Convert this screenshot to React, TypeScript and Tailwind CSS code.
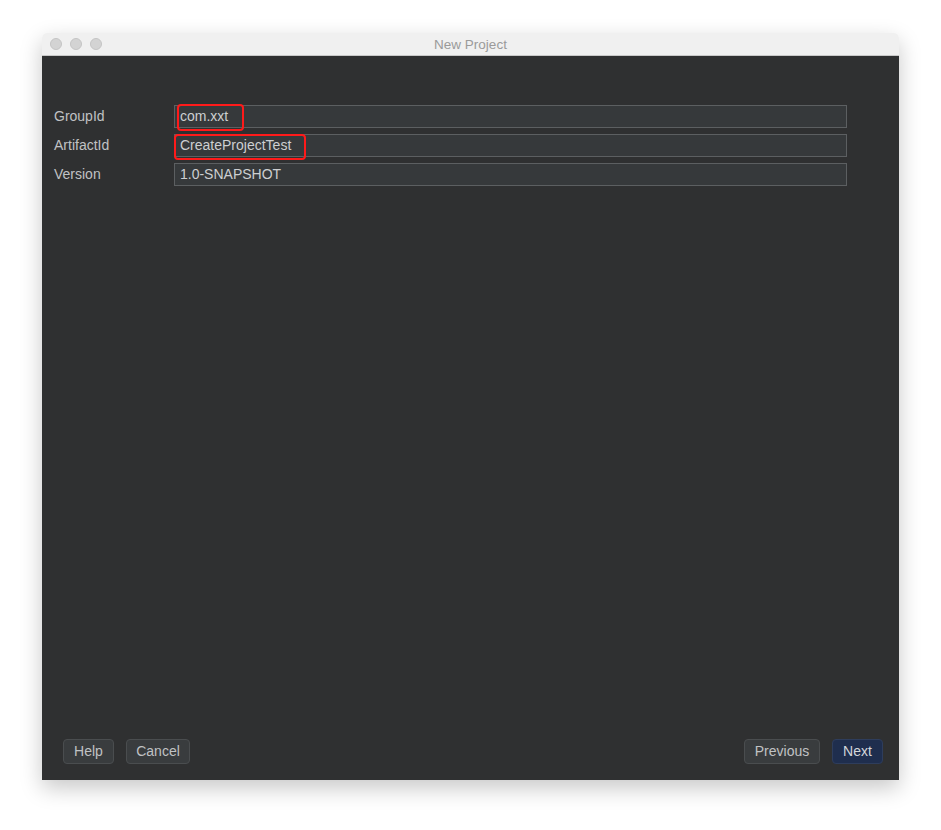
export default function App() {
  const fields = [
    { label: 'GroupId', value: 'com.xxt', mark: 'left-[2px] top-[-2px] w-[67px] h-[27px]' },
    { label: 'ArtifactId', value: 'CreateProjectTest', mark: 'left-[-1px] top-[-1px] w-[132px] h-[26px]' },
    { label: 'Version', value: '1.0-SNAPSHOT', mark: '' },
  ];

  return (
    <div className="w-[941px] h-[830px] bg-white pt-[33px] pl-[42px] font-['Liberation_Sans',Arial,sans-serif]">
      <div className="w-[857px] h-[747px] flex flex-col rounded-t-[5px] overflow-hidden shadow-[0_8px_22px_rgba(0,0,0,0.22)]">
        {/* title bar */}
        <div className="relative h-[23px] bg-[#f0f0f0] border-b border-[#c9c9c9] flex items-center">
          <div className="flex gap-[8px] pl-[8px]">
            <span className="w-[12px] h-[12px] rounded-full bg-[#d3d3d3] border border-[#c4c4c4]" />
            <span className="w-[12px] h-[12px] rounded-full bg-[#d3d3d3] border border-[#c4c4c4]" />
            <span className="w-[12px] h-[12px] rounded-full bg-[#d3d3d3] border border-[#c4c4c4]" />
          </div>
          <div className="absolute inset-0 flex items-center justify-center pt-[2px] text-[13.5px] text-[#9a9a9a]">New Project</div>
        </div>

        {/* body */}
        <div className="flex-1 bg-[#2f3031] flex flex-col">
          <div className="mt-[49px] flex flex-col gap-[6px] pl-[12px] pr-[52px]">
            {fields.map(f => (
              <div key={f.label} className="flex items-center h-[23px]">
                <div className="w-[120px] text-[14px] text-[#c0c2c4]">{f.label}</div>
                <div className="relative flex-1 h-[23px] bg-[#36393b] border border-[#5c5f61] flex items-center px-[5px] text-[14px] text-[#cdcfd1]">
                  {f.value}
                  {f.mark && (
                    <span className={`absolute ${f.mark} border-[2.5px] border-[#ff1a1a] rounded-[4px]`} />
                  )}
                </div>
              </div>
            ))}
          </div>

          <div className="mt-auto mb-[16px] flex items-center pl-[21px] pr-[16px]">
            <button className="h-[25px] w-[51px] rounded-[4px] bg-[#393c3e] border border-[#4a4d4f] text-[14px] text-[#c0c2c4]">Help</button>
            <button className="ml-[12px] h-[25px] w-[64px] rounded-[4px] bg-[#393c3e] border border-[#4a4d4f] text-[14px] text-[#c0c2c4]">Cancel</button>
            <div className="flex-1" />
            <button className="h-[25px] w-[76px] rounded-[4px] bg-[#393c3e] border border-[#4a4d4f] text-[14px] text-[#c0c2c4]">Previous</button>
            <button className="ml-[12px] h-[25px] w-[51px] rounded-[4px] bg-[#1f2e4e] border border-[#2e3d5c] text-[14px] text-[#d3d6da]">Next</button>
          </div>
        </div>
      </div>
    </div>
  );
}
